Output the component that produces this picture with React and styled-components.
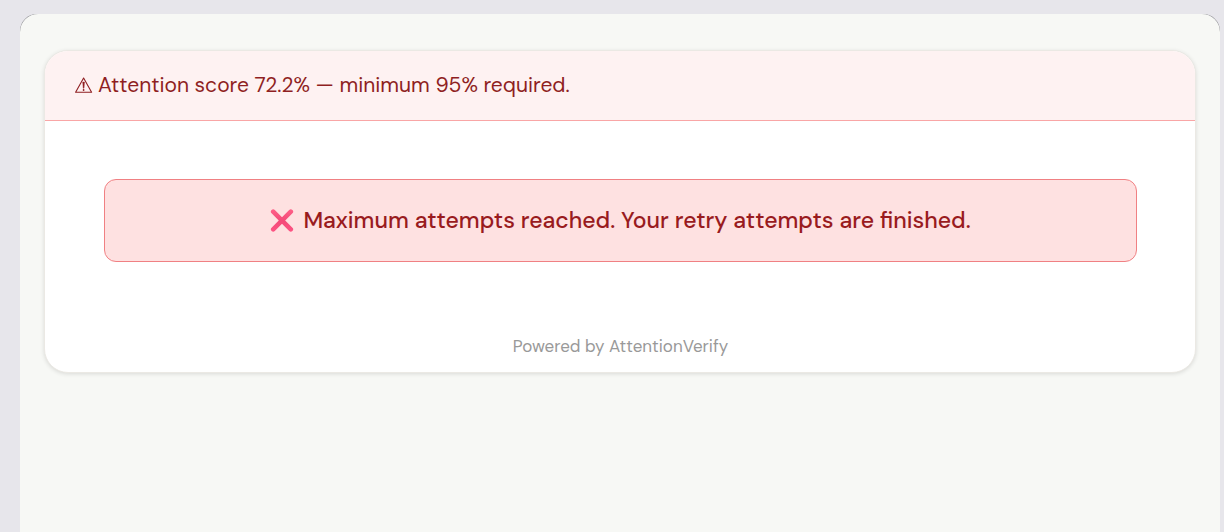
import React from 'react';
import styled, { createGlobalStyle } from 'styled-components';

const GlobalStyle = createGlobalStyle`
  * {
    box-sizing: border-box;
  }

  body {
    margin: 0;
    background: #e7e6eb;
    font-family: "DM Sans", Inter, "Liberation Sans", sans-serif;
  }
`;

const Page = styled.div`
  display: flex;
  min-height: 100vh;
  padding: 14px 4px 0 20px;
`;

const Frame = styled.div`
  display: flex;
  flex: 1;
  border-radius: 17px 17px 0 0;
  background: #77777c;
`;

const Panel = styled.main`
  flex: 1;
  padding: 36px 24px;
  border-radius: 18px 18px 0 0;
  background: #f7f8f5;
`;

const Card = styled.section`
  overflow: hidden;
  border: 1px solid #ebe9e4;
  border-radius: 24px;
  background: #fff;
  box-shadow: 0 1px 4px rgba(0, 0, 0, 0.12);
`;

const ScoreBar = styled.header`
  display: flex;
  align-items: center;
  gap: 5px;
  padding: 19px 30px 20px;
  border-bottom: 1px solid #f9a6a6;
  background: #fef2f2;
  color: #8f1f22;
  font-size: 21px;
  line-height: 30px;
`;

const Body = styled.div`
  padding: 58px 58px 14px 59px;
`;

const Alert = styled.div`
  display: flex;
  align-items: center;
  justify-content: center;
  gap: 9px;
  padding: 24px;
  border: 1px solid #f08083;
  border-radius: 12px;
  background: #fee1e1;
  color: #991b1e;
  font-size: 23px;
  font-weight: 500;
  line-height: 33px;
`;

const Footer = styled.footer`
  margin-top: 72px;
  color: #999;
  font-size: 17px;
  line-height: 24px;
  text-align: center;
`;

const WarningIcon = () => (
  <svg width="18" height="18" viewBox="0 0 18 18" fill="none" stroke="currentColor" aria-hidden="true">
    <path d="M8.6 2 L16.6 16.2 H0.6 Z" strokeWidth="1.1" strokeLinejoin="round" />
    <path d="M7.7 6 H9.5 L9 12.2 H8.2 Z" fill="currentColor" strokeWidth="0.4" />
    <circle cx="8.6" cy="14" r="0.9" fill="currentColor" stroke="none" />
  </svg>
);

const CrossIcon = () => (
  <svg width="24" height="24" viewBox="0 0 24 24" fill="none" aria-hidden="true">
    <defs>
      <linearGradient id="cross" x1="0" y1="0" x2="0" y2="24" gradientUnits="userSpaceOnUse">
        <stop offset="0" stopColor="#ff6088" />
        <stop offset="0.5" stopColor="#f34a78" />
        <stop offset="1" stopColor="#ff5585" />
      </linearGradient>
    </defs>
    <path d="M3.2 2.7 L20.8 20.3 M20.8 2.7 L3.2 20.3" stroke="url(#cross)" strokeWidth="4.6" strokeLinecap="round" />
  </svg>
);

export default function App() {
  return (
    <>
      <GlobalStyle />
      <Page>
        <Frame>
          <Panel>
            <Card>
              <ScoreBar>
                <WarningIcon />
                <span>Attention score 72.2% — minimum 95% required.</span>
              </ScoreBar>
              <Body>
                <Alert role="alert">
                  <CrossIcon />
                  <span>Maximum attempts reached. Your retry attempts are finished.</span>
                </Alert>
                <Footer>Powered by AttentionVerify</Footer>
              </Body>
            </Card>
          </Panel>
        </Frame>
      </Page>
    </>
  );
}
